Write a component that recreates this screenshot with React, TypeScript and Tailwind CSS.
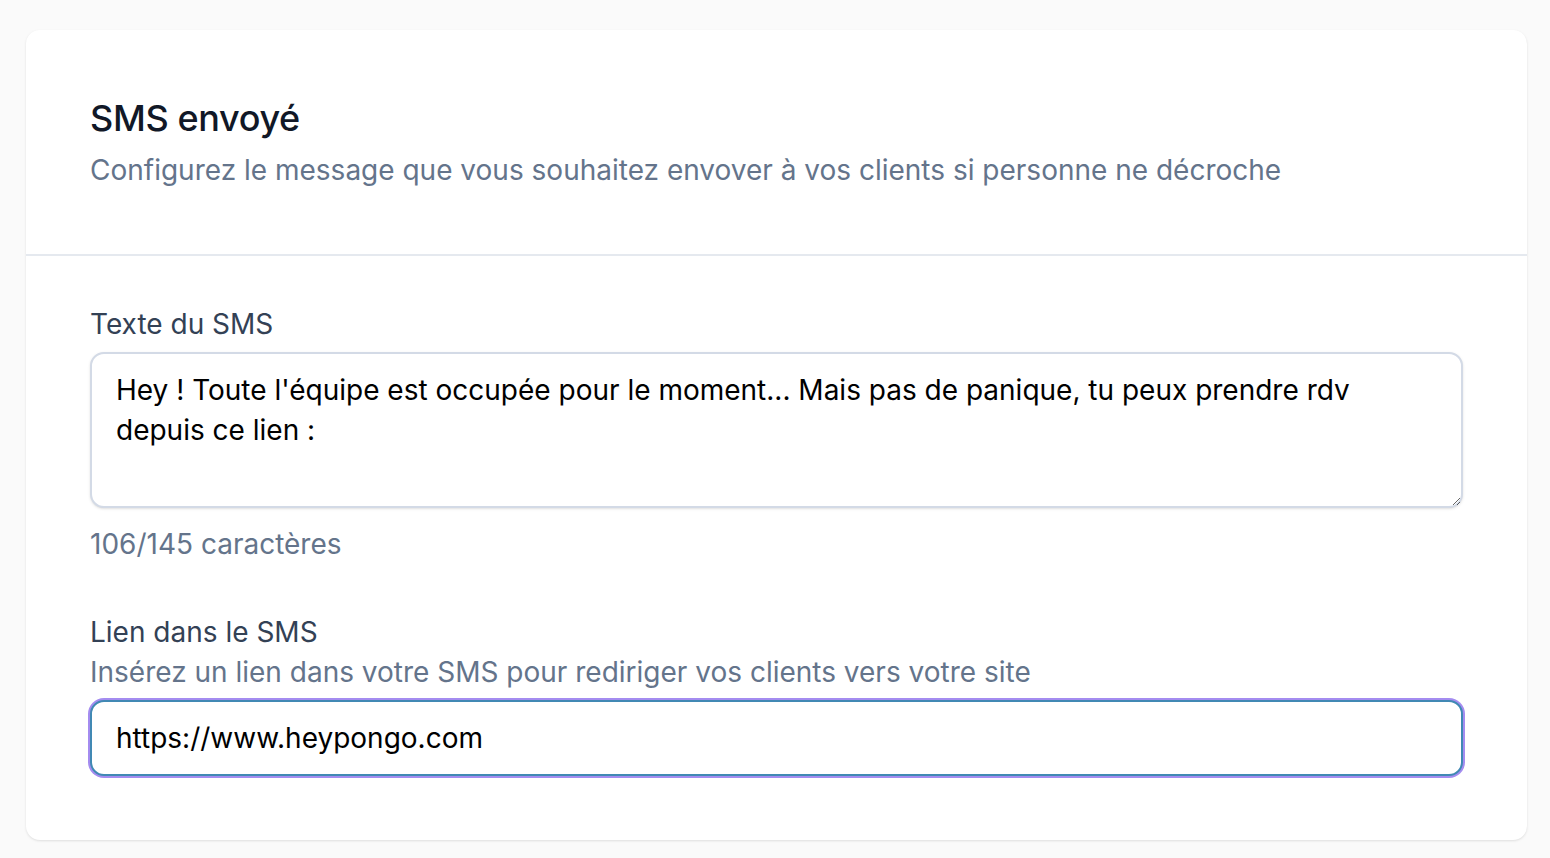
import { useState } from "react";

const DEFAULT_TEXT =
  "Hey ! Toute l'équipe est occupée pour le moment... Mais pas de panique, tu peux prendre rdv depuis ce lien :";

export default function App() {
  const [text, setText] = useState(DEFAULT_TEXT);
  const [link, setLink] = useState("https://www.heypongo.com");

  const count = Math.max(text.length - 2, 0);

  return (
    <div
      className="min-h-screen bg-[#fafafa] pt-[30px] pb-[18px] pl-[26px] pr-[23px]"
      style={{ fontFamily: "Inter, 'Noto Sans', sans-serif" }}
    >
      <div className="rounded-[14px] bg-white shadow-[0_1px_3px_rgba(0,0,0,0.08),0_1px_2px_rgba(0,0,0,0.04)]">
        <div className="border-b-2 border-[#e5e9ef] px-16 pt-16 pb-16">
          <h2 className="text-[36px] leading-[48px] font-medium tracking-[-0.01em] text-[#111827]">
            SMS envoyé
          </h2>
          <p className="mt-2 text-[28px] leading-[40px] text-[#64748b]">
            Configurez le message que vous souhaitez envover à vos clients si personne ne décroche
          </p>
        </div>

        <div className="px-16 pt-12 pb-16">
          <label className="block text-[28px] leading-[40px] text-[#334155]">Texte du SMS</label>
          <textarea
            rows={3}
            value={text}
            maxLength={145}
            onChange={(e) => setText(e.target.value)}
            className="mt-2 block w-full resize-y rounded-[14px] border-2 border-[#d3dae6] bg-white px-6 py-4 text-[28px] leading-[40px] text-black shadow-sm outline-none"
          />
          <p className="mt-4 text-[28px] leading-[40px] text-[#64748b]">{count}/145 caractères</p>

          <label className="mt-12 block text-[28px] leading-[40px] text-[#334155]">Lien dans le SMS</label>
          <p className="text-[28px] leading-[40px] text-[#64748b]">
            Insérez un lien dans votre SMS pour rediriger vos clients vers votre site
          </p>
          <input
            type="text"
            value={link}
            onChange={(e) => setLink(e.target.value)}
            className="mt-2 block w-full rounded-[14px] border-2 border-[#4189b4] bg-white px-6 py-4 text-[28px] leading-[40px] text-black outline-none ring-2 ring-[#a48cf0]"
          />
        </div>
      </div>
    </div>
  );
}
